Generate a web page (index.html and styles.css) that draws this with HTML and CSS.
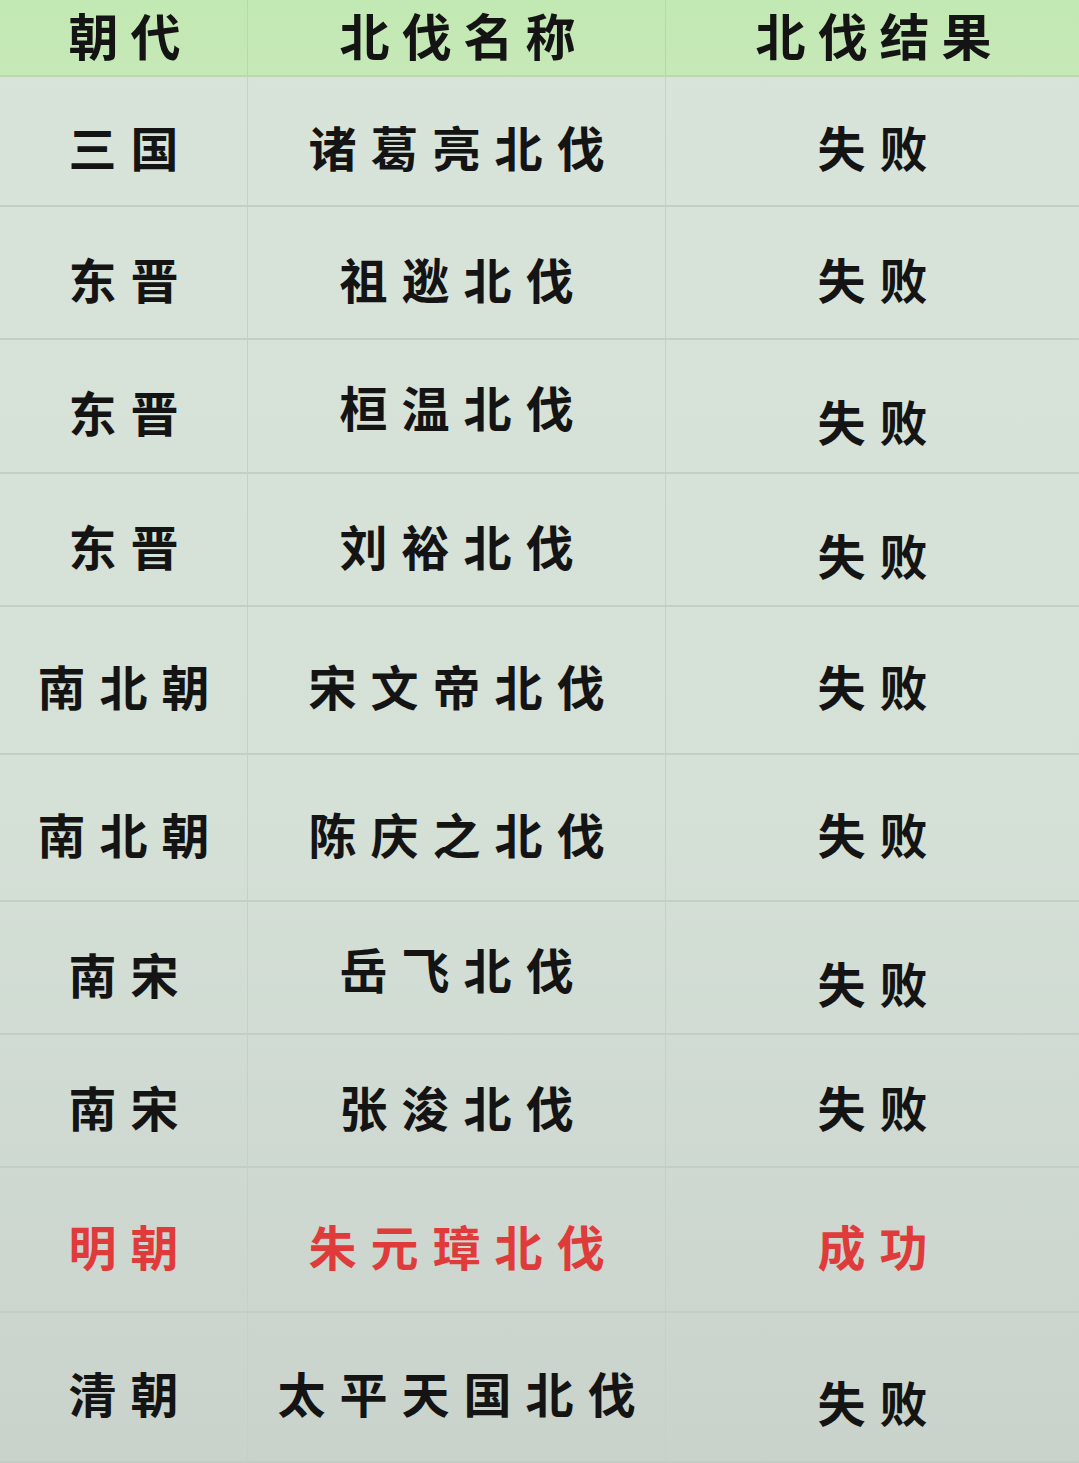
FILE: index.html
```html
<!DOCTYPE html>
<html lang="zh-CN">
<head>
<meta charset="utf-8">
<title>北伐</title>
<link rel="stylesheet" href="styles.css">
</head>
<body>
<div class="table">
  <div class="cell head">朝代</div>
  <div class="cell head">北伐名称</div>
  <div class="cell head">北伐结果</div>

  <div class="cell">三国</div>
  <div class="cell">诸葛亮北伐</div>
  <div class="cell">失败</div>

  <div class="cell">东晋</div>
  <div class="cell">祖逖北伐</div>
  <div class="cell">失败</div>

  <div class="cell">东晋</div>
  <div class="cell up">桓温北伐</div>
  <div class="cell down">失败</div>

  <div class="cell">东晋</div>
  <div class="cell">刘裕北伐</div>
  <div class="cell down">失败</div>

  <div class="cell">南北朝</div>
  <div class="cell">宋文帝北伐</div>
  <div class="cell">失败</div>

  <div class="cell">南北朝</div>
  <div class="cell">陈庆之北伐</div>
  <div class="cell">失败</div>

  <div class="cell">南宋</div>
  <div class="cell up">岳飞北伐</div>
  <div class="cell down">失败</div>

  <div class="cell">南宋</div>
  <div class="cell">张浚北伐</div>
  <div class="cell">失败</div>

  <div class="cell red">明朝</div>
  <div class="cell red">朱元璋北伐</div>
  <div class="cell red">成功</div>

  <div class="cell">清朝</div>
  <div class="cell">太平天国北伐</div>
  <div class="cell down">失败</div>
</div>
</body>
</html>
```
FILE: styles.css
```css
html, body {
  margin: 0;
  padding: 0;
}
body {
  width: 1079px;
  height: 1463px;
  overflow: hidden;
  background: #cdd7d0;
  font-family: "Noto Sans CJK SC", "Noto Sans", sans-serif;
}
.table {
  display: grid;
  grid-template-columns: 248px 418px 1fr;
  grid-template-rows: 77px 130px 133px 134px 133px 148px 147px 133px 133px 145px 150px;
  height: 1463px;
  background: linear-gradient(180deg, #d8e4da 0%, #d5e0d7 55%, #c9d3cc 100%);
}
.cell {
  display: flex;
  align-items: center;
  justify-content: center;
  padding: 10px 0 0 14px;
  box-sizing: border-box;
  font-size: 48px;
  font-weight: 700;
  letter-spacing: 14px;
  color: #141414;
  border-bottom: 2px solid #c3cec6;
  border-right: 1px solid #c6d0c9;
}
.cell:nth-child(3n) {
  border-right: none;
}
.head {
  background: linear-gradient(180deg, #c2e8b3 0%, #c6e9b7 100%);
  border-bottom: 2px solid #bcd8b0;
  border-right-color: #b8d8ab;
  padding-top: 0;
  padding-bottom: 8px;
  font-size: 50px;
  letter-spacing: 12px;
}
.up {
  padding-top: 0;
}
.down {
  padding-top: 28px;
}
.red {
  color: #e03b3b;
}
```
